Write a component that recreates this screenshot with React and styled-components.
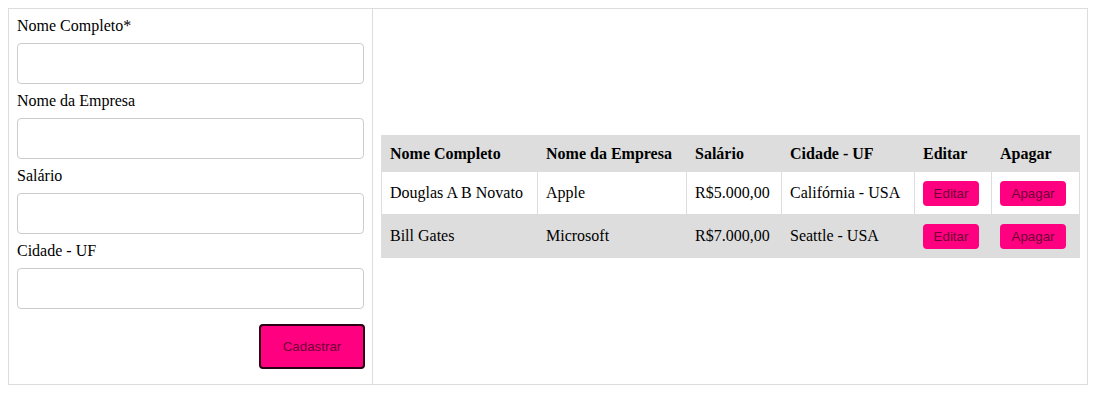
import React from "react";
import styled, { createGlobalStyle } from "styled-components";

const GlobalStyle = createGlobalStyle`
  body {
    margin: 8px;
    font-family: "Liberation Serif", "Times New Roman", serif;
    font-size: 16px;
    color: #000;
    background: #fff;
  }
`;

const Container = styled.div`
  display: flex;
  width: 1080px;
  height: 377px;
  box-sizing: border-box;
  border: 1px solid #dddddd;
`;

const Form = styled.form`
  display: flex;
  flex-direction: column;
  width: 364px;
  flex-shrink: 0;
  box-sizing: border-box;
  padding: 8px;
  border-right: 1px solid #dddddd;
`;

const Label = styled.label`
  display: block;
  line-height: 18px;
  margin-bottom: 8px;
`;

const Input = styled.input`
  display: block;
  box-sizing: border-box;
  width: 100%;
  height: 41px;
  border: 1px solid #cccccc;
  border-radius: 4px;
  margin: 0 0 8px 0;
  padding: 0 8px;
  font-size: 16px;
`;

const Actions = styled.div`
  display: flex;
  justify-content: flex-end;
  margin-top: 7px;
  margin-right: -1px;
`;

const PinkButton = styled.button`
  background: #ff0080;
  color: #6e0036;
  font-family: "Liberation Sans", Arial, sans-serif;
  font-size: 13.33px;
  border-radius: 4px;
  cursor: pointer;
  border: ${(p) => (p.big ? "2px solid #2a0015" : "none")};
  width: ${(p) => p.w}px;
  height: ${(p) => (p.big ? 45 : 25)}px;
  padding: 0;
`;

const Panel = styled.div`
  flex: 1;
  display: flex;
  align-items: center;
  padding: 0 8px;
`;

const Table = styled.table`
  width: 100%;
  border-collapse: collapse;
  table-layout: fixed;
`;

const Th = styled.th`
  text-align: left;
  font-weight: bold;
  padding: 0 8px;
  height: 35px;
  line-height: 18px;
  background: #dddddd;
  border: 1px solid #dddddd;
`;

const Row = styled.tr`
  background: ${(p) => (p.alt ? "#dddddd" : "#ffffff")};
`;

const Td = styled.td`
  padding: 0 8px;
  line-height: 18px;
  height: 42px;
  border: 1px solid #dddddd;
  vertical-align: middle;
`;

const fields = ["Nome Completo*", "Nome da Empresa", "Salário", "Cidade - UF"];

const rows = [
  { nome: "Douglas A B Novato", empresa: "Apple", salario: "R$5.000,00", cidade: "Califórnia - USA" },
  { nome: "Bill Gates", empresa: "Microsoft", salario: "R$7.000,00", cidade: "Seattle - USA" },
];

export default function App() {
  return (
    <>
      <GlobalStyle />
      <Container>
        <Form onSubmit={(e) => e.preventDefault()}>
          {fields.map((f) => (
            <div key={f}>
              <Label>{f}</Label>
              <Input type="text" />
            </div>
          ))}
          <Actions>
            <PinkButton big w={106} type="submit">Cadastrar</PinkButton>
          </Actions>
        </Form>
        <Panel>
          <Table>
            <colgroup>
              <col style={{ width: 156 }} />
              <col style={{ width: 149 }} />
              <col style={{ width: 95 }} />
              <col style={{ width: 133 }} />
              <col style={{ width: 77 }} />
              <col style={{ width: 88 }} />
            </colgroup>
            <thead>
              <tr>
                <Th>Nome Completo</Th>
                <Th>Nome da Empresa</Th>
                <Th>Salário</Th>
                <Th>Cidade - UF</Th>
                <Th>Editar</Th>
                <Th>Apagar</Th>
              </tr>
            </thead>
            <tbody>
              {rows.map((r, i) => (
                <Row key={r.nome} alt={i % 2 === 1}>
                  <Td>{r.nome}</Td>
                  <Td>{r.empresa}</Td>
                  <Td>{r.salario}</Td>
                  <Td>{r.cidade}</Td>
                  <Td>
                    <PinkButton w={56}>Editar</PinkButton>
                  </Td>
                  <Td>
                    <PinkButton w={66}>Apagar</PinkButton>
                  </Td>
                </Row>
              ))}
            </tbody>
          </Table>
        </Panel>
      </Container>
    </>
  );
}
